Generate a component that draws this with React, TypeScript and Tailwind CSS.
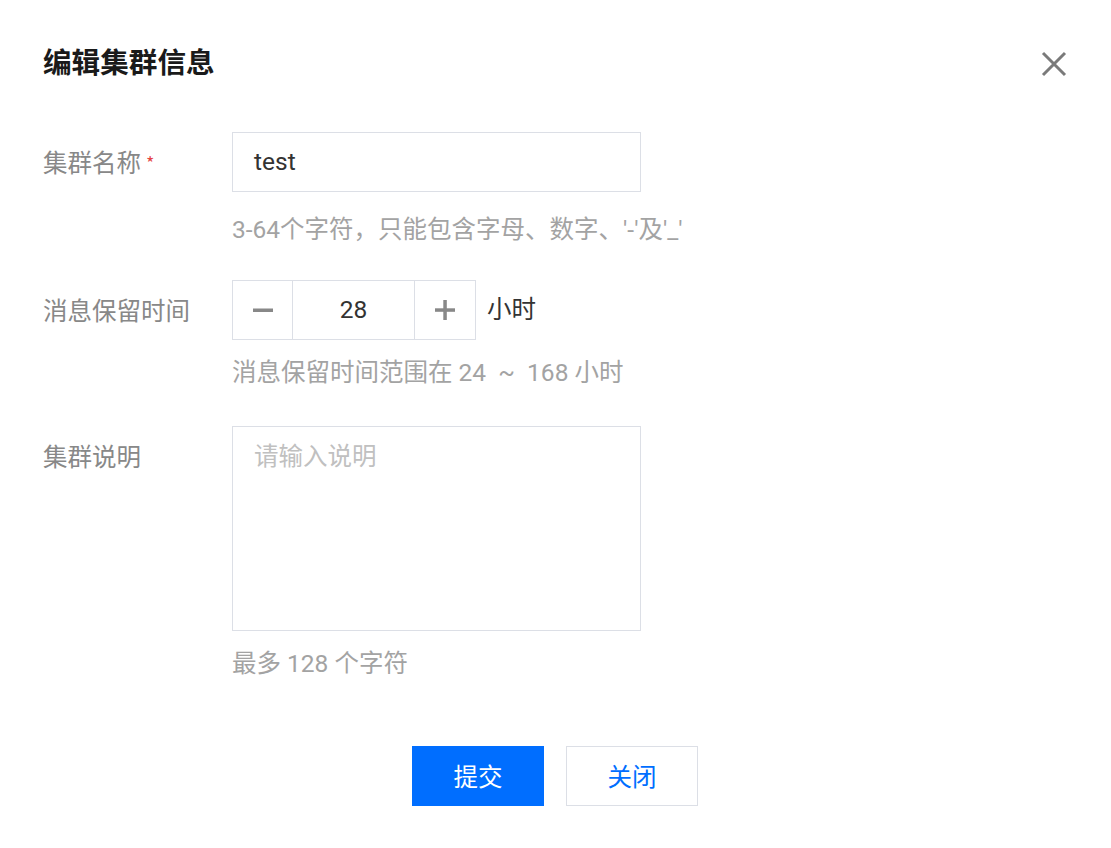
import React from "react";

const font = { fontFamily: 'Roboto, "Liberation Sans", "Noto Sans CJK SC", sans-serif' };
const cjk = { fontFamily: '"Noto Sans CJK SC", sans-serif' };

export default function App() {
  return (
    <div className="w-[1111px] h-[848px] bg-white relative overflow-hidden" style={font}>
      <button className="absolute left-[1041px] top-[51px] w-[26px] h-[26px] flex items-center justify-center">
        <svg width="26" height="26" viewBox="0 0 26 26">
          <path d="M2 2 L24 24 M24 2 L2 24" stroke="#7a7a7a" strokeWidth="3" strokeLinecap="butt" />
        </svg>
      </button>
      <div className="flex flex-col pl-[43px] pt-[41px]">
        <div className="text-[28.6px] leading-[40px] font-bold text-[#1a1a1a]" style={cjk}>编辑集群信息</div>

        <div className="flex mt-[51px]">
          <div className="w-[189px] h-[60px] flex items-center text-[24.5px] text-[#888888]" style={cjk}>
            集群名称<span className="text-[18px] text-[#e54545] ml-[5px]">*</span>
          </div>
          <div className="flex flex-col">
            <div className="w-[409px] h-[60px] border border-[#dcdfe6] flex items-center pl-[21px] text-[24.5px] text-[#333333]">test</div>
            <div className="mt-[22px] text-[24.5px] leading-[32px] text-[#a3a3a3]">3-64个字符，只能包含字母、数字、'-'及'_'</div>
          </div>
        </div>

        <div className="flex mt-[34px]">
          <div className="w-[189px] h-[60px] flex items-center text-[24.5px] text-[#888888]" style={cjk}>消息保留时间</div>
          <div className="flex flex-col">
            <div className="flex items-center">
              <div className="flex h-[60px] border border-[#dcdfe6]">
                <div className="w-[60px] flex items-center justify-center border-r border-[#dcdfe6]">
                  <svg width="22" height="22" viewBox="0 0 22 22"><rect x="1" y="9.5" width="20" height="3.5" fill="#888888" /></svg>
                </div>
                <div className="w-[121px] flex items-center justify-center text-[24.5px] text-[#333333]">28</div>
                <div className="w-[61px] flex items-center justify-center border-l border-[#dcdfe6]">
                  <svg width="22" height="22" viewBox="0 0 22 22"><rect x="1" y="9.3" width="20" height="3.5" fill="#888888" /><rect x="9.3" y="1" width="3.5" height="20" fill="#888888" /></svg>
                </div>
              </div>
              <div className="ml-[11px] text-[24.5px] text-[#333333]">小时</div>
            </div>
            <div className="mt-[17px] text-[24.5px] leading-[32px] text-[#a3a3a3] whitespace-pre">消息保留时间范围在 24  ~  168 小时</div>
          </div>
        </div>

        <div className="flex mt-[37px]">
          <div className="w-[189px] h-[60px] flex items-center text-[24.5px] text-[#888888]" style={cjk}>集群说明</div>
          <div className="flex flex-col">
            <div className="w-[409px] h-[205px] border border-[#dcdfe6] pl-[21px] pt-[14px] text-[24.5px] leading-[32px] text-[#c0c0c0]">请输入说明</div>
            <div className="mt-[17px] text-[24.5px] leading-[32px] text-[#a3a3a3]">最多 128 个字符</div>
          </div>
        </div>
      </div>

      <div className="flex justify-center gap-[22px] mt-[66px] pr-[1px]" style={cjk}>
        <button className="w-[132px] h-[60px] bg-[#006eff] text-white text-[24.5px]">提交</button>
        <button className="w-[132px] h-[60px] bg-white border border-[#dcdfe6] text-[#006eff] text-[24.5px]">关闭</button>
      </div>
    </div>
  );
}
